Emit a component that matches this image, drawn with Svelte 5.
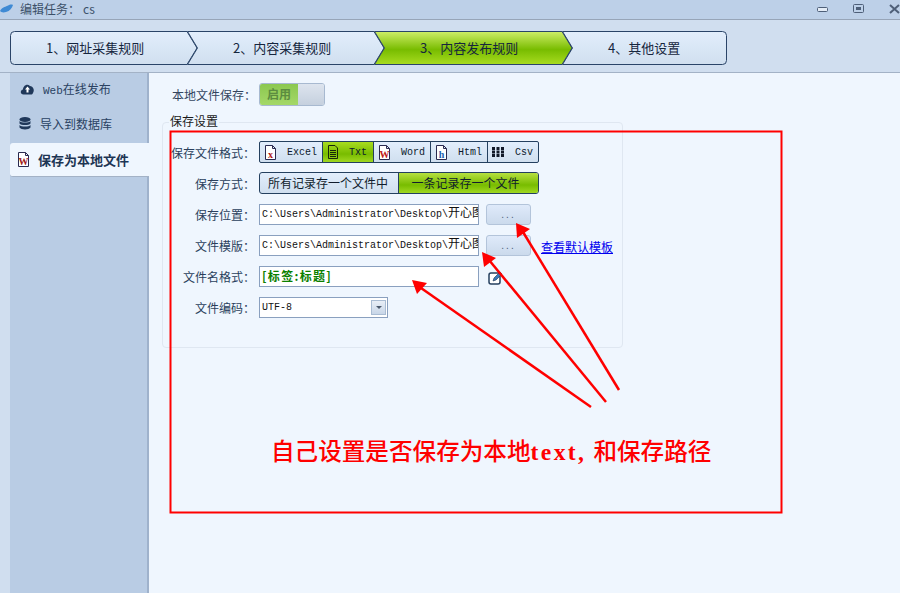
<script>
  const steps = [
    { label: "1、网址采集规则", width: 177, first: true },
    { label: "2、内容采集规则", width: 187 },
    { label: "3、内容发布规则", width: 188, active: true },
    { label: "4、其他设置", width: 165, last: true },
  ];
  const H = 34;
  const TIP = 10;

  // outline of one chevron step, drawn in its own box
  function stepPath(s) {
    const w = s.width;
    if (s.last) {
      return `M.5 .5 H${w - 4.5} Q${w - .5} .5 ${w - .5} 4.5 V${H - 4.5} Q${w - .5} ${H - .5} ${w - 4.5} ${H - .5} H.5 L${TIP + .5} ${H / 2} Z`;
    }
    return s.first
      ? `M4.5 .5 H${w} L${w + TIP} ${H / 2} L${w} ${H - .5} H4.5 Q.5 ${H - .5} .5 ${H - 4.5} V4.5 Q.5 .5 4.5 .5 Z`
      : `M.5 .5 H${w} L${w + TIP} ${H / 2} L${w} ${H - .5} H.5 L${TIP + .5} ${H / 2} Z`;
  }

  const formats = [
    { name: "Excel", icon: "x", color: "#b01818", width: 63 },
    { name: "Txt", icon: "txt", width: 51, active: true },
    { name: "Word", icon: "W", color: "#c02020", width: 57 },
    { name: "Html", icon: "h", color: "#2060b0", width: 57 },
    { name: "Csv", icon: "csv", width: 51 },
  ];
</script>

{#snippet doc(mark, color)}
  <svg class="doc" width="13" height="15" viewBox="0 0 13 15">
    <path d="M1.5 .5 H8.5 L11.5 3.5 V14.5 H1.5 Z M8.5 .5 V3.5 H11.5" fill="#fff" stroke="#2a2a50" />
    <text x="6.5" y="12.5" text-anchor="middle" class="doc-mark" fill={color}>{mark}</text>
  </svg>
{/snippet}

<div class="window">
  <header class="titlebar">
    <svg class="logo" width="13" height="9" viewBox="0 0 13 9">
      <path d="M0 7 C2 3 5 3 7 2 C9 1 11 0 13 1 C12 4 10 7 6 8 C3 9 1 8 0 7 Z" fill="#3f8ad4" />
    </svg>
    <span class="title">编辑任务：<span class="title-name">cs</span></span>
    <div class="winbtns">
      <svg width="12" height="8" viewBox="0 0 12 8"><rect x=".5" y="2.5" width="10" height="4" rx="1" fill="#e4ecf6" stroke="#4e5f78" /></svg>
      <svg width="12" height="10" viewBox="0 0 12 10"><rect x=".5" y=".5" width="10" height="8" rx="1" fill="none" stroke="#4e5f78" /><rect x="3" y="3" width="5" height="3" fill="#4e5f78" /></svg>
      <svg width="12" height="10" viewBox="0 0 12 10"><path d="M1 1 L10 9 M10 1 L1 9" stroke="#4e5f78" stroke-width="2" /></svg>
    </div>
  </header>

  <nav class="steps">
    {#each steps as s}
      <div class="step" class:active={s.active} class:last={s.last} style="width:{s.width}px">
        <svg class="step-bg" width={s.width + TIP + 1} height={H} viewBox="0 0 {s.width + TIP + 1} {H}">
          <defs>
            <linearGradient id="blue" x1="0" y1="0" x2="0" y2="1">
              <stop offset="0" stop-color="#e2eefc" />
              <stop offset="1" stop-color="#d0dfef" />
            </linearGradient>
            <linearGradient id="green" x1="0" y1="0" x2="0" y2="1">
              <stop offset="0" stop-color="#cfee68" />
              <stop offset=".55" stop-color="#78bc00" />
              <stop offset="1" stop-color="#a8dc20" />
            </linearGradient>
          </defs>
          <path d={stepPath(s)} fill={s.active ? "url(#green)" : "url(#blue)"} stroke="#2a4468" />
        </svg>
        <span class="step-label">{s.label}</span>
      </div>
    {/each}
  </nav>

  <div class="body">
    <aside class="sidebar">
      <div class="side-item">
        <svg class="side-icon" width="15" height="12" viewBox="0 0 15 12">
          <path d="M3.5 11.5 C0 11.5 0 7 3 6.5 C3 3 7 0 10 3 C13 3 15 7 13 10 C12.5 11 12 11.5 11 11.5 Z" fill="#20385a" />
          <path d="M7.5 3.5 L10 6.5 H8.5 V9.5 H6.5 V6.5 H5 Z" fill="#fff" />
        </svg>
        <span class="web"><span class="mono">Web</span>在线发布</span>
      </div>
      <div class="side-item">
        <svg class="side-icon db" width="12" height="13" viewBox="0 0 12 13">
          <ellipse cx="6" cy="2.5" rx="5.5" ry="2.5" fill="#20385a" />
          <path d="M.5 4 C2 6 10 6 11.5 4 V6.5 C10 8.5 2 8.5 .5 6.5 Z M.5 8 C2 10 10 10 11.5 8 V10.5 C10 13 2 13 .5 10.5 Z" fill="#20385a" />
        </svg>
        <span>导入到数据库</span>
      </div>
      <div class="side-item current">
        {@render doc("W", "#a02020")}
        <span>保存为本地文件</span>
      </div>
    </aside>

    <main class="content">
      <div class="toggle-row">
        <span class="toggle-label">本地文件保存：</span>
        <div class="toggle">
          <span class="toggle-on">启用</span>
          <span class="toggle-off"></span>
        </div>
      </div>

      <section class="group">
        <span class="legend">保存设置</span>
        <div class="form">
          <span class="lbl">保存文件格式：</span>
          <div class="formats">
            {#each formats as f}
              <div class="fmt" class:active={f.active} style="width:{f.width}px">
                {#if f.icon === "txt"}
                  <svg width="12" height="14" viewBox="0 0 12 14"><path d="M1.5 .5 H8 L10.5 3 V13.5 H1.5 Z" fill="none" stroke="#16260a" /><path d="M3 5.5 H9 M3 7.5 H9 M3 9.5 H9 M3 11.5 H9" stroke="#16260a" /></svg>
                {:else if f.icon === "csv"}
                  <svg width="13" height="10" viewBox="0 0 13 10"><path d="M0 0 H3 V3 H0 Z M4.5 0 H7.5 V3 H4.5 Z M9 0 H12 V3 H9 Z M0 3.5 H3 V6.5 H0 Z M4.5 3.5 H7.5 V6.5 H4.5 Z M9 3.5 H12 V6.5 H9 Z M0 7 H3 V10 H0 Z M4.5 7 H7.5 V10 H4.5 Z M9 7 H12 V10 H9 Z" fill="#101828" /></svg>
                {:else}
                  {@render doc(f.icon, f.color)}
                {/if}
                <span class="fmt-name">{f.name}</span>
              </div>
            {/each}
          </div>

          <span class="lbl">保存方式：</span>
          <div class="modes">
            <div class="mode">所有记录存一个文件中</div>
            <div class="mode active">一条记录存一个文件</div>
          </div>

          <span class="lbl">保存位置：</span>
          <div class="line">
            <div class="input path">C:\Users\Administrator\Desktop\<span class="path-cjk">开心图</span></div>
            <button class="dots">...</button>
          </div>

          <span class="lbl">文件模版：</span>
          <div class="line">
            <div class="input path">C:\Users\Administrator\Desktop\<span class="path-cjk">开心图</span></div>
            <button class="dots">...</button>
            <span class="link">查看默认模板</span>
          </div>

          <span class="lbl">文件名格式：</span>
          <div class="line">
            <div class="input tag">[标签:标题]</div>
            <svg class="pencil" width="15" height="15" viewBox="0 0 15 15">
              <rect x="1" y="3" width="11" height="11" rx="2" fill="#fff" stroke="#26405f" stroke-width="1.5" />
              <path d="M5 11 L6 8 L12 2 L14 4 L8 10 Z" fill="#3a78b8" stroke="#1c3350" stroke-width=".6" />
            </svg>
          </div>

          <span class="lbl">文件编码：</span>
          <div class="select">
            <span class="select-val">UTF-8</span>
            <span class="select-btn"><i></i></span>
          </div>
        </div>
      </section>
    </main>
  </div>

  <!-- red annotation painted over the screenshot -->
  <svg class="annot" width="900" height="593" viewBox="0 0 900 593">
    <rect x="170.5" y="131.5" width="611" height="381" fill="none" stroke="#ff0000" stroke-width="2" />
    <g stroke="#ff0000" stroke-width="2.5" fill="none">
      <path d="M619 390 L523 232" />
      <path d="M606 402 L489 260" />
      <path d="M591 407 L421 288" />
    </g>
    <g fill="#ff0000">
      <path d="M516 223 L530 229 L517 238 Z" />
      <path d="M482 252 L496 258 L484 267 Z" />
      <path d="M412 280 L427 283 L417 294 Z" />
    </g>
  </svg>
  <div class="note">自己设置是否保存为本地<span class="note-en">text,</span>和保存路径</div>
</div>

<style>
  :global(body) {
    margin: 0;
    background: #eff6fe;
  }

  .window {
    position: relative;
    width: 900px;
    height: 593px;
    overflow: hidden;
    display: flex;
    flex-direction: column;
    font-family: "Noto Sans CJK SC", "Liberation Sans", sans-serif;
    font-size: 12px;
    color: #1d3554;
    background: #eff6fe;
  }

  .titlebar {
    height: 20px;
    flex: none;
    box-sizing: border-box;
    display: flex;
    align-items: center;
    background: #bdd0e8;
    border-bottom: 1px solid #97a5b8;
    padding-bottom: 3px;
  }

  .logo {
    margin-right: 7px;
  }

  .title {
    color: #3c5068;
    font-size: 12px;
  }

  .title-name {
    margin-left: 3px;
  }

  .winbtns {
    margin-left: auto;
    display: flex;
    align-items: center;
    gap: 24px;
    margin-right: -1px;
    padding-top: 2px;
  }

  .steps {
    height: 53px;
    flex: none;
    box-sizing: border-box;
    display: flex;
    align-items: flex-start;
    padding: 11px 0 0 10px;
    background: #d0deef;
    border-bottom: 1px solid #a3b2c6;
  }

  .step {
    position: relative;
    height: 34px;
    line-height: 33px;
    font-size: 13px;
    color: #16263e;
  }

  .step-bg {
    position: absolute;
    left: 0;
    top: 0;
  }

  .step.active {
    z-index: 2;
  }

  .step-label {
    position: relative;
    z-index: 3;
    display: block;
    padding-left: 36px;
  }

  .step.last .step-label {
    padding-left: 46px;
  }

  .step:nth-child(2) .step-label,
  .step:nth-child(3) .step-label {
    padding-left: 46px;
  }

  .body {
    flex: 1;
    display: flex;
    min-height: 0;
  }

  .sidebar {
    width: 149px;
    flex: none;
    box-sizing: border-box;
    padding-left: 10px;
    background: linear-gradient(to right, #d0deef 10px, #b9cce4 10px);
    border-right: 2px solid #9fb2cc;
  }

  .side-item {
    height: 35px;
    box-sizing: border-box;
    padding-bottom: 4px;
    display: flex;
    align-items: center;
    padding-left: 10px;
    gap: 8px;
    color: #2a4262;
  }

  .side-item .db {
    margin-right: 1px;
    margin-left: -1px;
  }

  .mono {
    font-family: "Liberation Mono", monospace;
    font-size: 11px;
  }

  .side-item.current {
    height: 34px;
    padding-bottom: 0;
    background: #eff6fe;
    border-radius: 3px 0 0 3px;
    border-bottom: 1px solid #a3b2c6;
    margin-right: -2px;
    padding-left: 7px;
    gap: 8px;
    font-size: 13px;
    font-weight: 700;
    color: #1d3554;
  }

  .doc {
    flex: none;
    display: block;
  }

  .doc-mark {
    font-family: "Liberation Serif", serif;
    font-size: 10px;
    font-weight: 700;
  }

  .content {
    flex: 1;
    padding: 10px 0 0 13px;
    min-width: 0;
  }

  .toggle-row {
    display: flex;
    align-items: center;
    height: 23px;
    padding-left: 10px;
    color: #33455e;
  }

  .toggle-label {
    width: 87px;
  }

  .toggle {
    display: flex;
    width: 66px;
    height: 23px;
    box-sizing: border-box;
    border: 1px solid #a7b9d0;
    border-radius: 3px;
    overflow: hidden;
  }

  .toggle-on {
    width: 38px;
    text-align: center;
    line-height: 20px;
    font-weight: 700;
    color: #5c8c40;
    background: linear-gradient(#8cc850, #a4d868);
  }

  .toggle-off {
    flex: 1;
    background: linear-gradient(#dde4ee, #c5d0de);
  }

  .group {
    position: relative;
    width: 461px;
    height: 226px;
    box-sizing: border-box;
    margin-top: 16px;
    border: 1px solid #dfe7f1;
    border-radius: 4px;
  }

  .legend {
    position: absolute;
    left: 6px;
    top: -10px;
    padding: 0 1px;
    background: #eff6fe;
    color: #1a1a1a;
    line-height: 16px;
  }

  .form {
    display: grid;
    grid-template-columns: 88px 1fr;
    grid-auto-rows: 22px;
    row-gap: 9px;
    column-gap: 8px;
    align-items: center;
    padding: 18px 0 0 0;
  }

  .lbl {
    text-align: right;
    white-space: nowrap;
    justify-self: end;
    color: #2a3f5c;
    margin-right: -4px;
  }

  .formats {
    display: flex;
    width: 280px;
    height: 22px;
    box-sizing: border-box;
    border: 1px solid #24405f;
    border-radius: 2px;
    overflow: hidden;
    background: linear-gradient(#e2eefc, #d0dfef);
  }

  .fmt {
    flex: none;
    box-sizing: border-box;
    display: flex;
    align-items: center;
    gap: 10px;
    padding-left: 4px;
    border-right: 1px solid #24405f;
  }

  .fmt:last-child {
    border-right: 0;
    flex: 1;
  }

  .fmt.active {
    background: linear-gradient(#a8dc20, #78bc00 60%, #a0d820);
  }

  .fmt-name {
    font-family: "Liberation Mono", monospace;
    font-size: 10px;
    color: #0c1a2c;
  }

  .modes {
    display: flex;
    width: 280px;
    height: 22px;
    box-sizing: border-box;
    border: 1px solid #24405f;
    border-radius: 3px;
    overflow: hidden;
    color: #101c2c;
    background: linear-gradient(#e2eefc, #d0dfef);
    line-height: 20px;
  }

  .mode {
    width: 139px;
    box-sizing: border-box;
    text-align: center;
    padding-right: 2px;
    border-right: 1px solid #24405f;
  }

  .mode.active {
    flex: 1;
    border-right: 0;
    padding-right: 6px;
    background: linear-gradient(#b6e040, #78bc00 60%, #a0d820);
  }

  .line {
    display: flex;
    align-items: flex-end;
    height: 22px;
  }

  .input {
    width: 220px;
    height: 21px;
    box-sizing: border-box;
    background: #fff;
    border: 1px solid #8aa0bf;
    line-height: 19px;
    padding-left: 2px;
    overflow: hidden;
    white-space: nowrap;
    color: #111;
  }

  .path {
    font-family: "Liberation Mono", monospace;
    font-size: 10px;
    line-height: 20px;
  }

  .path-cjk {
    font-family: "Noto Sans CJK SC", sans-serif;
    font-size: 12px;
    line-height: 1;
  }

  .tag {
    font-weight: 700;
    color: #0a8000;
    font-size: 12px;
    letter-spacing: 1.3px;
    line-height: 18px;
  }

  .dots {
    width: 45px;
    height: 21px;
    margin-left: 7px;
    padding: 0;
    font: 10px "Liberation Sans", sans-serif;
    letter-spacing: 2px;
    color: #4e5f78;
    border: 1px solid #b3c4da;
    border-radius: 3px;
    background: linear-gradient(#dfeafa, #cbdaec);
  }

  .link {
    margin-left: 10px;
    margin-bottom: 1px;
    color: #0000ee;
    text-decoration: underline;
  }

  .pencil {
    margin-left: 9px;
    margin-bottom: 2px;
  }

  .select {
    display: flex;
    align-items: center;
    align-self: end;
    width: 129px;
    height: 21px;
    box-sizing: border-box;
    border: 1px solid #8aa0bf;
    background: #fff;
  }

  .select-val {
    flex: 1;
    padding-left: 2px;
    font-family: "Liberation Mono", monospace;
    font-size: 10px;
    color: #111;
  }

  .select-btn {
    width: 15px;
    height: 15px;
    margin-right: 1px;
    display: flex;
    align-items: center;
    justify-content: center;
    background: linear-gradient(#e8eef6, #c8d6e8);
    border: 1px solid #a9bcd3;
    box-sizing: border-box;
  }

  .select-btn i {
    width: 0;
    height: 0;
    border: 3px solid transparent;
    border-top: 3px solid #4a586c;
    border-bottom: 0;
  }

  .annot {
    position: absolute;
    left: 0;
    top: 0;
    pointer-events: none;
  }

  .note {
    position: absolute;
    left: 271px;
    top: 434px;
    font-family: "Noto Sans CJK SC", serif;
    font-size: 23.6px;
    font-weight: 500;
    line-height: 32px;
    color: #ff0000;
    white-space: nowrap;
  }

  .note-en {
    font-family: "Liberation Serif", serif;
    font-weight: 700;
    letter-spacing: 2.4px;
    margin-right: 7px;
  }
</style>
